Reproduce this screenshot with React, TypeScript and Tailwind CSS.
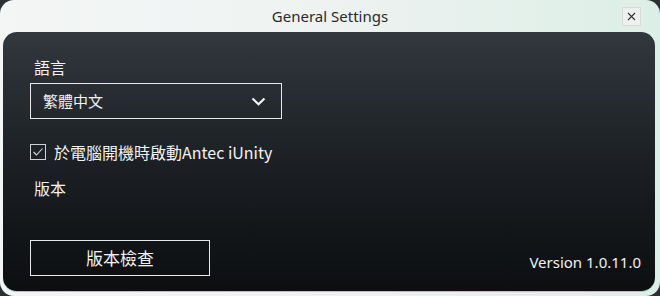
import React from "react";

export default function App() {
  const cjk = { fontFamily: '"Noto Sans CJK TC", "Noto Sans", sans-serif' };
  return (
    <div className="w-[660px] h-[296px] bg-[#2b3034] overflow-hidden">
      <div className="relative w-[660px] h-[296px] rounded-[14px] bg-gradient-to-r from-[#f4f6f6] via-[#eef2f1] to-[#dcefe6] flex flex-col">
        <div className="h-[32px] flex items-center justify-center relative">
          <span className="text-[15px] text-[#2a2a2a] mt-[1px]" style={{ fontFamily: '"Noto Sans", "Open Sans", sans-serif' }}>
            General Settings
          </span>
          <div className="absolute left-[622px] top-[7px] w-[19px] h-[19px] border border-[#d6dada] bg-[#eef0f0] flex items-center justify-center">
            <svg width="9" height="9" viewBox="0 0 9 9">
              <path d="M1 1 L8 8 M8 1 L1 8" stroke="#333" strokeWidth="1.1" />
            </svg>
          </div>
        </div>
        <div className="flex-1 ml-[3px] mr-[5px] mb-[4px] rounded-[14px] bg-gradient-to-b from-[#31383e] via-[#1c2024] to-[#0c0e10] flex flex-col pl-[27px] pr-[14px] pt-[24px] pb-[15px] border-b border-[#9fc9c4]">
          <div className="h-[22px] leading-[22px] text-[16px] text-[#f2f2f2] pl-[4px]" style={cjk}>語言</div>
          <div className="mt-[5px] w-[252px] h-[36px] border border-[#e8e8e8] flex items-center justify-between pl-[12px] pr-[15px]">
            <span className="text-[15px] text-[#f2f2f2]" style={cjk}>繁體中文</span>
            <svg width="15" height="9" viewBox="0 0 15 9">
              <path d="M1.5 1.5 L7.5 7.2 L13.5 1.5" stroke="#f4f4f4" strokeWidth="2.2" fill="none" />
            </svg>
          </div>
          <div className="mt-[22px] h-[22px] flex items-center">
            <div className="w-[16px] h-[16px] border border-[#cfd2d4] flex items-center justify-center">
              <svg width="12" height="10" viewBox="0 0 12 10">
                <path d="M1.5 5 L4.5 8 L10.5 1.5" stroke="#d8dadb" strokeWidth="1.1" fill="none" />
              </svg>
            </div>
            <span className="ml-[8px] text-[16px] text-[#f2f2f2]" style={cjk}>於電腦開機時啟動Antec iUnity</span>
          </div>
          <div className="mt-[14px] h-[22px] leading-[22px] text-[16px] text-[#f2f2f2] pl-[4px]" style={cjk}>版本</div>
          <div className="mt-auto flex items-end justify-between">
            <div className="w-[180px] h-[36px] border border-[#e8e8e8] flex items-center justify-center">
              <span className="text-[17px] text-[#f2f2f2]" style={cjk}>版本檢查</span>
            </div>
            <span className="text-[15px] text-[#f2f2f2] mb-[3px]" style={{ fontFamily: '"Noto Sans", "Open Sans", sans-serif' }}>
              Version 1.0.11.0
            </span>
          </div>
        </div>
      </div>
    </div>
  );
}
